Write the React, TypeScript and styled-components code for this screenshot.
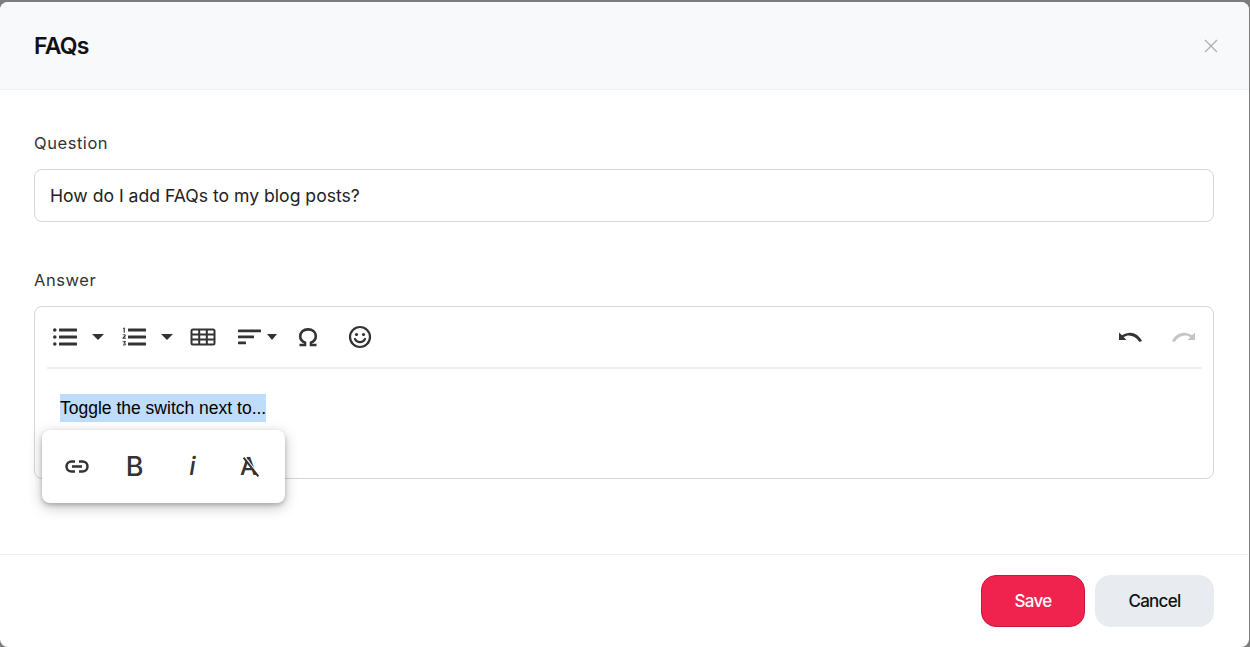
import styled, { createGlobalStyle } from 'styled-components';

const Global = createGlobalStyle`
  html, body {
    margin: 0;
    height: 100%;
    background: #7d7d7d;
    overflow: hidden;
  }
  * { box-sizing: border-box; }
`;

const Modal = styled.div`
  width: 1249px;
  height: 645px;
  margin-top: 2px;
  background: #fff;
  border-radius: 8px;
  overflow: hidden;
  display: flex;
  flex-direction: column;
  font-family: Inter, "Liberation Sans", sans-serif;
  color: #111;
`;

const Header = styled.header`
  height: 88px;
  flex: none;
  display: flex;
  align-items: center;
  justify-content: space-between;
  padding: 0 30px 0 34px;
  background: #f8f9fb;
  border-bottom: 1px solid #eef0f2;
`;

const Title = styled.h1`
  margin: 0;
  font-size: 23px;
  line-height: 28px;
  font-weight: 600;
  letter-spacing: -0.8px;
  color: #111;
`;

const Close = styled.button`
  width: 16px;
  height: 16px;
  padding: 0;
  border: 0;
  background: none;
  display: flex;
  color: #a8abb0;
`;

const Body = styled.main`
  flex: 1;
  padding: 41px 35px 0 34px;
  display: flex;
  flex-direction: column;
`;

const Label = styled.label`
  font-size: 16.5px;
  line-height: 24px;
  letter-spacing: 0.55px;
  color: #333;
  margin-bottom: 14px;
`;

const Input = styled.div`
  height: 53px;
  border: 1px solid #d6d6d6;
  border-radius: 8px;
  padding: 0 15px;
  display: flex;
  align-items: center;
  font-size: 17.6px;
  color: #222;
  margin-bottom: 46px;
`;

const Editor = styled.div`
  position: relative;
  height: 173px;
  border: 1px solid #d6d6d6;
  border-radius: 8px;
  padding: 0 11px 0 12px;
`;

const Toolbar = styled.div`
  height: 62px;
  padding: 0 7px 0 6px;
  display: flex;
  align-items: center;
  justify-content: space-between;
  border-bottom: 2px solid #efefef;
`;

const ToolGroup = styled.div`
  display: flex;
  align-items: center;
`;

const Tool = styled.span<{ $after?: number; $muted?: boolean }>`
  display: flex;
  align-items: center;
  margin-right: ${({ $after }) => $after ?? 0}px;
  color: ${({ $muted }) => ($muted ? '#c4c4c4' : '#333')};
  svg { display: block; }
`;

const Content = styled.div`
  padding: 25px 13px 0;
  font-family: "Liberation Sans", Arial, sans-serif;
  font-size: 17.5px;
  line-height: 28px;
  color: #000;
`;

const Selected = styled.span`
  display: inline-block;
  background: #bfdcfa;
`;

const Popup = styled.div`
  position: absolute;
  left: 7px;
  top: 123px;
  width: 243px;
  height: 73px;
  border-radius: 8px;
  background: #fff;
  box-shadow: 0 2px 4px rgba(0, 0, 0, 0.2), 0 4px 14px rgba(0, 0, 0, 0.25);
  display: flex;
  align-items: center;
  justify-content: center;
`;

const PopupTool = styled.span`
  width: 58px;
  height: 40px;
  display: flex;
  align-items: center;
  justify-content: center;
  color: #333;
  font-size: 27px;
  line-height: 1;
  font-weight: 500;
`;

const ItalicGlyph = styled.span`
  font-size: 25px;
  font-style: italic;
`;

const StruckGlyph = styled.span`
  position: relative;
  left: -2px;
  font-size: 24px;
  &::after {
    content: '';
    position: absolute;
    left: -1px;
    top: 11px;
    width: 24px;
    height: 2px;
    background: #333;
    box-shadow: 0 -1px 0 #fff;
    transform: rotate(52deg);
  }
`;

const Footer = styled.footer`
  flex: none;
  height: 93px;
  display: flex;
  align-items: flex-start;
  justify-content: flex-end;
  gap: 10px;
  padding: 20px 35px 0 0;
  border-top: 1px solid #eef0f2;
`;

const Button = styled.button<{ $primary?: boolean }>`
  height: 52px;
  width: ${({ $primary }) => ($primary ? 104 : 119)}px;
  border-radius: 15px;
  border: 1px solid ${({ $primary }) => ($primary ? '#c4183f' : '#e8ebf0')};
  background: ${({ $primary }) => ($primary ? '#f0234f' : '#e8ebf0')};
  color: ${({ $primary }) => ($primary ? '#fff' : '#111')};
  font-family: inherit;
  font-size: 17px;
  font-weight: 500;
  letter-spacing: -0.7px;
`;

const BulletIcon = () => (
  <svg width="24" height="24" viewBox="0 0 24 24" fill="currentColor">
    <circle cx="1.800" cy="5" r="1.800" />
    <circle cx="1.800" cy="12" r="1.800" />
    <circle cx="1.800" cy="19" r="1.800" />
    <rect x="6" y="3.600" width="18" height="2.900" rx="0.500" />
    <rect x="6" y="10.600" width="18" height="2.900" rx="0.500" />
    <rect x="6" y="17.600" width="18" height="2.900" rx="0.500" />
  </svg>
);

const NumberIcon = () => (
  <svg width="24" height="24" viewBox="0 0 24 24" fill="currentColor">
    <path d="M1 3 2.800 2.400v5.400H1.700V3.800l-.7.200zM.5 9.700c.7-.7 3.200-.8 3.300.7 0 1-1 1.600-1.800 2.300h1.900v1H.5v-1l2-2.100c.3-.5-.2-.9-1.400-.2zM.6 16h3.200v.9l-1.100 1.100c1 .1 1.400.8 1.200 1.600-.3 1.100-2.400 1.200-3.200.4l.4-.8c.7.400 1.600.500 1.700-.2 0-.5-.6-.6-1.300-.5v-.8l1-1H.6z" />
    <rect x="6" y="3.600" width="18" height="2.900" rx="0.500" />
    <rect x="6" y="10.600" width="18" height="2.900" rx="0.500" />
    <rect x="6" y="17.600" width="18" height="2.900" rx="0.500" />
  </svg>
);

const Caret = ({ width = 12 }: { width?: number }) => (
  <svg width={width} height="6" viewBox="0 0 12 6" fill="currentColor" preserveAspectRatio="none">
    <path d="M0 0h12L6 6z" />
  </svg>
);

const TableIcon = () => (
  <svg width="26" height="24" viewBox="0 0 26 24" fill="none" stroke="currentColor" strokeWidth="2">
    <rect x="1.500" y="4.500" width="23" height="15" rx="1.500" />
    <path d="M1.500 9.500h23M1.500 14.500h23M9.200 4.500v15M16.800 4.500v15" />
  </svg>
);

const AlignIcon = () => (
  <svg width="24" height="24" viewBox="0 0 24 24" fill="currentColor">
    <rect x="0" y="4.500" width="23" height="2.800" rx="0.500" />
    <rect x="0" y="10.500" width="16" height="2.800" rx="0.500" />
    <rect x="0" y="16.500" width="8" height="2.800" rx="0.500" />
  </svg>
);

const OmegaIcon = () => (
  <svg width="24" height="24" viewBox="0 0 24 24" fill="none" stroke="currentColor" strokeWidth="2.600">
    <path d="M3.500 20h5.500v-2.400c-2.900-1.300-4.800-3.500-4.800-6.400 0-4 3.300-6.800 7.800-6.800s7.800 2.800 7.800 6.800c0 2.900-1.900 5.100-4.800 6.400V20h5.500" />
  </svg>
);

const SmileIcon = () => (
  <svg width="24" height="24" viewBox="0 0 24 24" fill="none" stroke="currentColor" strokeWidth="2.200">
    <circle cx="12" cy="12" r="10" />
    <circle cx="8.500" cy="9.500" r="1.600" fill="currentColor" stroke="none" />
    <circle cx="15.500" cy="9.500" r="1.600" fill="currentColor" stroke="none" />
    <path d="M7 14c1 2 2.800 3.200 5 3.200s4-1.200 5-3.200" strokeLinecap="round" />
  </svg>
);

const UndoIcon = () => (
  <svg width="24" height="24" viewBox="0 0 24 24" fill="currentColor">
    <path d="M0 7.500V15h7.500l-2.800-2.800c4.300-3.200 11-2.200 15.800 4.800l2.500-1C18.500 7.500 10.500 5.400 3 10.300z" />
  </svg>
);

const RedoIcon = () => (
  <svg width="24" height="24" viewBox="0 0 24 24" fill="currentColor">
    <path d="M24 7.500V15h-7.500l2.800-2.800c-4.300-3.200-11-2.200-15.800 4.800L1 16C5.500 7.500 13.500 5.400 21 10.300z" />
  </svg>
);

const LinkIcon = () => (
  <svg width="26" height="26" viewBox="0 0 26 26" fill="none" stroke="currentColor" strokeWidth="2.500">
    <path d="M11 7.500H7.500a5 5 0 0 0 0 10H11M15 7.500h3.500a5 5 0 0 1 0 10H15M8 12.500h10" />
  </svg>
);

const CloseIcon = () => (
  <svg width="16" height="16" viewBox="0 0 16 16" fill="none" stroke="currentColor" strokeWidth="1.100">
    <path d="M2 2l12 12M14 2 2 14" />
  </svg>
);

export default function App() {
  return (
    <>
      <Global />
      <Modal>
        <Header>
          <Title>FAQs</Title>
          <Close aria-label="Close">
            <CloseIcon />
          </Close>
        </Header>
        <Body>
          <Label>Question</Label>
          <Input>How do I add FAQs to my blog posts?</Input>
          <Label>Answer</Label>
          <Editor>
            <Toolbar>
              <ToolGroup>
                <Tool $after={15}><BulletIcon /></Tool>
                <Tool $after={18}><Caret /></Tool>
                <Tool $after={15}><NumberIcon /></Tool>
                <Tool $after={17}><Caret /></Tool>
                <Tool $after={22}><TableIcon /></Tool>
                <Tool $after={5}><AlignIcon /></Tool>
                <Tool $after={19}><Caret width={10} /></Tool>
                <Tool $after={28}><OmegaIcon /></Tool>
                <Tool><SmileIcon /></Tool>
              </ToolGroup>
              <ToolGroup>
                <Tool $after={28}><UndoIcon /></Tool>
                <Tool $muted><RedoIcon /></Tool>
              </ToolGroup>
            </Toolbar>
            <Content>
              <Selected>Toggle the switch next to...</Selected>
            </Content>
            <Popup>
              <PopupTool><LinkIcon /></PopupTool>
              <PopupTool>B</PopupTool>
              <PopupTool><ItalicGlyph>i</ItalicGlyph></PopupTool>
              <PopupTool><StruckGlyph>A</StruckGlyph></PopupTool>
            </Popup>
          </Editor>
        </Body>
        <Footer>
          <Button $primary>Save</Button>
          <Button>Cancel</Button>
        </Footer>
      </Modal>
    </>
  );
}
